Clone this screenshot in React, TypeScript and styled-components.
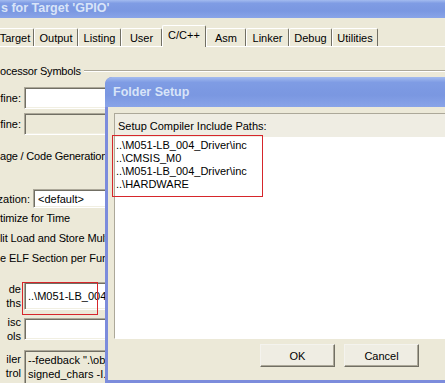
import React from "react";
import styled, { createGlobalStyle, css } from "styled-components";

const GlobalStyle = createGlobalStyle`
    html, body {
        margin: 0;
        padding: 0;
        background: #ece9d8;
    }
    body {
        font-family: "Liberation Sans", Arial, sans-serif;
        font-size: 11px;
        color: #000;
        overflow: hidden;
    }
`

const sunken = css`
    box-sizing: border-box;
    border-top: 1px solid #aca899;
    border-left: 1px solid #aca899;
    border-right: 1px solid #fff;
    border-bottom: 1px solid #fff;
    box-shadow: inset 1px 1px 0 #716f64, inset -1px -1px 0 #f1efe2;
`

const titleBar = css`
    background: linear-gradient(to bottom, #a3bbef 0%, #7f9ce4 18%, #7a97e1 60%, #89a4e8 100%);
    color: #d8e4f8;
    font-family: "Liberation Sans", Arial, sans-serif;
    font-weight: bold;
    font-size: 12.5px;
    white-space: nowrap;
`

const tabs = [
    { label: "Target", width: 38, shift: -4 },
    { label: "Output", width: 44 },
    { label: "Listing", width: 43 },
    { label: "User", width: 41 },
    { label: "C/C++", width: 44, active: true },
    { label: "Asm", width: 40 },
    { label: "Linker", width: 43 },
    { label: "Debug", width: 43 },
    { label: "Utilities", width: 46 },
]

const includePaths = [
    "..\\M051-LB_004_Driver\\inc",
    "..\\CMSIS_M0",
    "..\\M051-LB_004_Driver\\inc",
    "..\\HARDWARE",
]

export default function App() {
    return (
        <Screen>
            <GlobalStyle />
            <MainWindow>
                <WindowTitle>s for Target 'GPIO'</WindowTitle>
                <TabStrip>
                    {tabs.map((t) => (
                        <Tab key={t.label} $w={t.width} $shift={t.shift ?? 0} $active={!!t.active}>
                            {t.label}
                        </Tab>
                    ))}
                </TabStrip>
                <TabPanel>
                    <GroupHeader $top={0}>
                        <GroupTitle>ocessor Symbols</GroupTitle>
                        <GroupLine />
                    </GroupHeader>
                    <FieldRow $top={9} $h={22}>
                        <Label>fine:</Label>
                        <TextBox />
                    </FieldRow>
                    <FieldRow $top={4} $h={22}>
                        <Label>fine:</Label>
                        <TextBox $disabled />
                    </FieldRow>
                    <GroupHeader $top={14}>
                        <GroupTitle>age / Code Generation</GroupTitle>
                    </GroupHeader>
                    <FieldRow $top={26} $h={19}>
                        <Label $w={30}>zation:</Label>
                        <ComboBox>&lt;default&gt;</ComboBox>
                    </FieldRow>
                    <CheckRow>timize for Time</CheckRow>
                    <CheckRow>lit Load and Store Multiple</CheckRow>
                    <CheckRow>e ELF Section per Function</CheckRow>
                    <FieldRow $top={14} $h={28}>
                        <Label>
                            <LabelLines>
                                <span>de</span>
                                <span>ths</span>
                            </LabelLines>
                        </Label>
                        <TextBox>..\M051-LB_004_Driver</TextBox>
                        <Highlight style={{ left: 22, top: 0, width: 76, height: 33 }} />
                    </FieldRow>
                    <FieldRow $top={8} $h={22}>
                        <Label>
                            <LabelLines>
                                <span>isc</span>
                                <span>ols</span>
                            </LabelLines>
                        </Label>
                        <TextBox />
                    </FieldRow>
                    <FieldRow $top={10} $h={45} $alignTop>
                        <Label>
                            <LabelLines $pad={2}>
                                <span>iler</span>
                                <span>trol</span>
                            </LabelLines>
                        </Label>
                        <ControlBox>
                            <span>--feedback ".\obj\GPIO.fed"</span>
                            <span>signed_chars -I..\M051</span>
                        </ControlBox>
                    </FieldRow>
                </TabPanel>
            </MainWindow>

            <Dialog>
                <DialogTitle>Folder Setup</DialogTitle>
                <DialogBody>
                    <PathsFrame>
                        <PathsHeader>Setup Compiler Include Paths:</PathsHeader>
                        <PathList>
                            {includePaths.map((p, i) => (
                                <PathItem key={i}>{p}</PathItem>
                            ))}
                            <Highlight style={{ left: -3, top: -2, width: 151, height: 62 }} />
                        </PathList>
                    </PathsFrame>
                    <ButtonRow>
                        <Button>OK</Button>
                        <Button>Cancel</Button>
                    </ButtonRow>
                </DialogBody>
            </Dialog>
        </Screen>
    )
}

const Screen = styled.div`
    position: relative;
    width: 445px;
    height: 383px;
    overflow: hidden;
    background: #ece9d8;
`

const MainWindow = styled.div`
    display: flex;
    flex-direction: column;
    width: 445px;
`

const WindowTitle = styled.div`
    ${titleBar}
    height: 18px;
    line-height: 16px;
    padding-left: 1px;
`

const TabStrip = styled.div`
    display: flex;
    align-items: flex-end;
    height: 29px;
    box-sizing: border-box;
    border-bottom: 1px solid #fff;
`

const Tab = styled.div<{ $w: number; $shift: number; $active: boolean }>`
    position: relative;
    display: flex;
    align-items: center;
    justify-content: center;
    flex-shrink: 0;
    width: ${(p) => p.$w}px;
    height: ${(p) => (p.$active ? 22 : 18)}px;
    margin-left: ${(p) => p.$shift}px;
    margin-bottom: ${(p) => (p.$active ? -1 : 0)}px;
    padding-bottom: ${(p) => (p.$active ? 3 : 0)}px;
    box-sizing: border-box;
    border-top: 1px solid #fff;
    border-left: 1px solid #fff;
    border-right: 1px solid #716f64;
    border-radius: 2px 2px 0 0;
    background: #ece9d8;
    white-space: nowrap;
    z-index: ${(p) => (p.$active ? 1 : 0)};
`

const TabPanel = styled.div`
    display: flex;
    flex-direction: column;
    padding-top: 17px;
`

const GroupHeader = styled.div<{ $top: number }>`
    display: flex;
    align-items: center;
    gap: 3px;
    height: 14px;
    margin-top: ${(p) => p.$top}px;
    white-space: nowrap;
`

const GroupTitle = styled.span`
    letter-spacing: -0.2px;
`

const GroupLine = styled.div`
    flex: 1;
    height: 0;
    border-top: 1px solid #aca899;
    border-bottom: 1px solid #fff;
`

const FieldRow = styled.div<{ $top: number; $h: number; $alignTop?: boolean }>`
    position: relative;
    display: flex;
    align-items: ${(p) => (p.$alignTop ? "flex-start" : "center")};
    gap: 3px;
    height: ${(p) => p.$h}px;
    margin-top: ${(p) => p.$top}px;
`

const Label = styled.div<{ $w?: number }>`
    display: flex;
    justify-content: flex-end;
    flex-shrink: 0;
    width: ${(p) => p.$w ?? 21}px;
    white-space: nowrap;
`

const LabelLines = styled.div<{ $pad?: number }>`
    display: flex;
    flex-direction: column;
    align-items: flex-end;
    padding-top: ${(p) => p.$pad ?? 0}px;
    line-height: 14px;
`

const TextBox = styled.div<{ $disabled?: boolean }>`
    ${sunken}
    display: flex;
    align-items: center;
    width: 120px;
    height: 100%;
    padding-left: 3px;
    background: ${(p) => (p.$disabled ? "#ece9d8" : "#fff")};
    white-space: nowrap;
    overflow: hidden;
`

const ComboBox = styled(TextBox)`
    padding-left: 4px;
`

const CheckRow = styled.div`
    display: flex;
    align-items: center;
    height: 20px;
    white-space: nowrap;
    letter-spacing: -0.1px;
`

const ControlBox = styled.div`
    ${sunken}
    display: flex;
    flex-direction: column;
    width: 120px;
    height: 100%;
    padding: 2px 0 0 3px;
    line-height: 14px;
    background: #ece9d8;
    white-space: pre;
    overflow: hidden;
`

const Highlight = styled.div`
    position: absolute;
    box-sizing: border-box;
    border: 1px solid #d6262b;
    pointer-events: none;
    z-index: 2;
`

const Dialog = styled.div`
    position: absolute;
    left: 105px;
    top: 77px;
    width: 370px;
    height: 306px;
    display: flex;
    flex-direction: column;
    box-sizing: border-box;
    padding: 0 3px 3px 3px;
    border-radius: 7px 7px 0 0;
    background: #7c8cdc;
    overflow: hidden;
    z-index: 3;
`

const DialogTitle = styled.div`
    ${titleBar}
    display: flex;
    align-items: center;
    height: 30px;
    margin: 0 -3px;
    padding-left: 8px;
    padding-bottom: 1px;
    box-sizing: border-box;
    font-size: 12.5px;
    border-radius: 7px 7px 0 0;
`

const DialogBody = styled.div`
    flex: 1;
    display: flex;
    flex-direction: column;
    padding: 6px 0 0 6px;
    background: #ece9d8;
`

const PathsFrame = styled.div`
    display: flex;
    flex-direction: column;
    width: 420px;
    border-top: 1px solid #aca899;
    border-left: 1px solid #aca899;
    border-bottom: 1px solid #fff;
`

const PathsHeader = styled.div`
    display: flex;
    align-items: center;
    height: 23px;
    padding-left: 3px;
    background: #efede3;
    white-space: nowrap;
`

const PathList = styled.div`
    position: relative;
    height: 201px;
    padding: 2px 0 0 1px;
    box-sizing: border-box;
    background: #fff;
`

const PathItem = styled.div`
    height: 13px;
    line-height: 13px;
    white-space: nowrap;
`

const ButtonRow = styled.div`
    display: flex;
    gap: 9px;
    margin-top: 5px;
    padding-left: 146px;
`

const Button = styled.div`
    display: flex;
    align-items: center;
    justify-content: center;
    width: 75px;
    height: 23px;
    box-sizing: border-box;
    border: 1px solid;
    border-color: #f4f3ee #716f64 #716f64 #f4f3ee;
    box-shadow: inset -1px -1px 0 #aca899;
    background: #efede3;
`
